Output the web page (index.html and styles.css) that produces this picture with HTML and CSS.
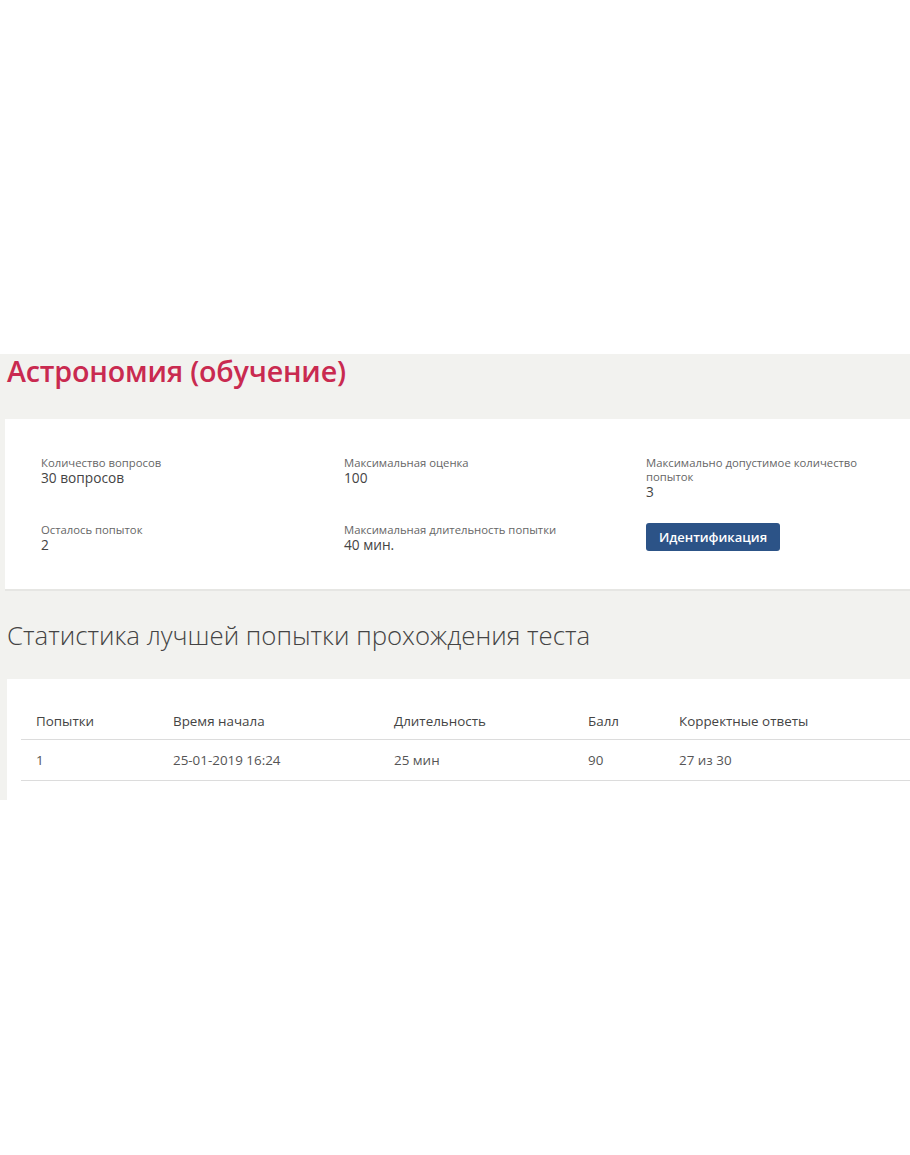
FILE: index.html
```html
<!DOCTYPE html>
<html lang="ru">
<head>
<meta charset="utf-8">
<title>Астрономия (обучение)</title>
<link rel="stylesheet" href="styles.css">
</head>
<body>
<div class="top-space"></div>
<main class="page">
  <h1 class="title">Астрономия (обучение)</h1>
  <section class="card info">
    <div class="info-grid">
      <div class="field">
        <div class="label">Количество вопросов</div>
        <div class="value">30 вопросов</div>
      </div>
      <div class="field">
        <div class="label">Максимальная оценка</div>
        <div class="value">100</div>
      </div>
      <div class="field narrow">
        <div class="label">Максимально допустимое количество попыток</div>
        <div class="value">3</div>
      </div>
      <div class="field">
        <div class="label">Осталось попыток</div>
        <div class="value">2</div>
      </div>
      <div class="field">
        <div class="label">Максимальная длительность попытки</div>
        <div class="value">40 мин.</div>
      </div>
      <div class="field">
        <button class="btn" type="button">Идентификация</button>
      </div>
    </div>
  </section>
  <h2 class="section-title">Статистика лучшей попытки прохождения теста</h2>
  <section class="card stats">
    <table class="stats-table">
      <thead>
        <tr>
          <th class="c1">Попытки</th>
          <th class="c2">Время начала</th>
          <th class="c3">Длительность</th>
          <th class="c4">Балл</th>
          <th class="c5">Корректные ответы</th>
        </tr>
      </thead>
      <tbody>
        <tr>
          <td>1</td>
          <td>25-01-2019 16:24</td>
          <td>25 мин</td>
          <td>90</td>
          <td>27 из 30</td>
        </tr>
      </tbody>
    </table>
  </section>
</main>
</body>
</html>
```
FILE: styles.css
```css
html, body {
  margin: 0;
  padding: 0;
  background: #ffffff;
  font-family: "Open Sans", "Noto Sans", sans-serif;
  color: #444;
}

.top-space {
  height: 354px;
}

.page {
  background: #f2f2ef;
  padding: 0 0 0 5px;
  display: flow-root;
}

.title {
  margin: 0 0 0 2px;
  font-size: 28.7px;
  line-height: 34px;
  font-weight: 600;
  color: #c92a50;
  letter-spacing: -0.2px;
}

.card {
  background: #ffffff;
}

.info {
  margin-top: 31px;
  padding: 37px 0 36px 36px;
  border-bottom: 2px solid #e6e6e3;
}

.info-grid {
  display: grid;
  grid-template-columns: 303px 302px 232px;
  row-gap: 23px;
}

.label {
  font-size: 11.3px;
  line-height: 14px;
  color: #666;
  font-weight: 400;
}

.value {
  font-size: 13.7px;
  line-height: 16px;
  color: #444;
}

.btn {
  margin-top: 0;
  width: 134px;
  height: 28px;
  border: none;
  border-radius: 3px;
  background: #2c5387;
  color: #ffffff;
  font-family: "Open Sans", "Noto Sans", sans-serif;
  font-size: 13px;
  font-weight: 600;
  padding: 0;
  cursor: pointer;
}

.section-title {
  margin: 27px 0 0 2px;
  font-size: 25.8px;
  line-height: 34px;
  font-weight: 300;
  color: #444;
}

.stats {
  margin-top: 27px;
  margin-left: 2px;
  padding: 23px 0 19px 14px;
}

.stats-table {
  width: 100%;
  border-collapse: collapse;
  font-size: 13.4px;
  color: #555;
}

.stats-table th,
.stats-table td {
  text-align: left;
  padding: 0 0 0 15px;
}

.stats-table th {
  font-weight: 500;
  color: #444;
  height: 37px;
  border-bottom: 1px solid #dcdcdc;
  vertical-align: middle;
}

.stats-table td {
  height: 40px;
  border-bottom: 1px solid #dcdcdc;
  font-weight: 400;
}

.c1 { width: 122px; }
.c2 { width: 206px; }
.c3 { width: 179px; }
.c4 { width: 76px; }
```
